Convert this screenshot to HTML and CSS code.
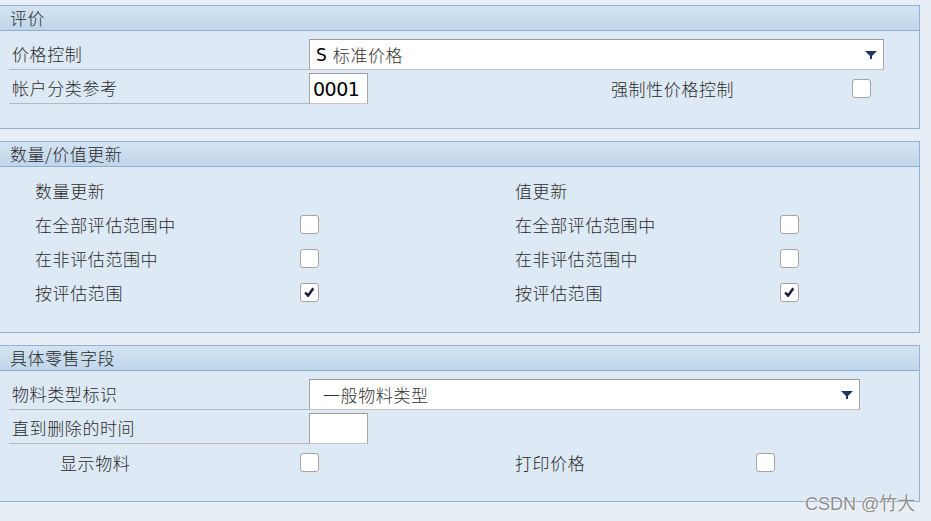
FILE: index.html
```html
<!DOCTYPE html>
<html lang="zh-CN">
<head>
<meta charset="utf-8">
<title>评价</title>
<link rel="stylesheet" href="styles.css">
</head>
<body>
<section class="panel p1">
  <div class="hdr">评价</div>
  <div class="body">
    <div class="row">
      <div class="lbl">价格控制</div>
      <div class="input dd w-dd1"><span class="code">S</span><span class="val">标准价格</span><span class="arrow"></span></div>
    </div>
    <div class="row">
      <div class="lbl">帐户分类参考</div>
      <div class="input small"><span class="code big">0001</span></div>
      <div class="plain l-force">强制性价格控制</div>
      <span class="cb"></span>
    </div>
  </div>
</section>

<section class="panel p2">
  <div class="hdr">数量/价值更新</div>
  <div class="body">
    <div class="qrow">
      <div class="half"><span class="qlbl">数量更新</span></div>
      <div class="half"><span class="qlbl">值更新</span></div>
    </div>
    <div class="qrow">
      <div class="half"><span class="qlbl">在全部评估范围中</span><span class="cb"></span></div>
      <div class="half"><span class="qlbl">在全部评估范围中</span><span class="cb"></span></div>
    </div>
    <div class="qrow">
      <div class="half"><span class="qlbl">在非评估范围中</span><span class="cb"></span></div>
      <div class="half"><span class="qlbl">在非评估范围中</span><span class="cb"></span></div>
    </div>
    <div class="qrow">
      <div class="half"><span class="qlbl">按评估范围</span><span class="cb on"><svg viewBox="0 0 18 18" width="18" height="18"><path d="M4.5 9.5 L7.5 13 L13 5" fill="none" stroke="#1c1c3a" stroke-width="2.6" stroke-linejoin="round"/></svg></span></div>
      <div class="half"><span class="qlbl">按评估范围</span><span class="cb on"><svg viewBox="0 0 18 18" width="18" height="18"><path d="M4.5 9.5 L7.5 13 L13 5" fill="none" stroke="#1c1c3a" stroke-width="2.6" stroke-linejoin="round"/></svg></span></div>
    </div>
  </div>
</section>

<section class="panel p3">
  <div class="hdr">具体零售字段</div>
  <div class="body">
    <div class="row">
      <div class="lbl">物料类型标识</div>
      <div class="input dd w-dd2"><span class="val ind">一般物料类型</span><span class="arrow"></span></div>
    </div>
    <div class="row">
      <div class="lbl">直到删除的时间</div>
      <div class="input small"></div>
    </div>
    <div class="qrow last">
      <div class="half"><span class="qlbl ind2">显示物料</span><span class="cb"></span></div>
      <div class="half"><span class="qlbl short">打印价格</span><span class="cb"></span></div>
    </div>
  </div>
</section>

<div class="wm">CSDN @竹大</div>
</body>
</html>
```

FILE: styles.css
```css
html, body {
  margin: 0;
  padding: 0;
}
body {
  background: #e7eef6;
  width: 931px;
  height: 521px;
  overflow: hidden;
  position: relative;
  padding-top: 5px;
  box-sizing: border-box;
  font-family: "Noto Sans CJK SC", "Noto Sans", sans-serif;
  font-weight: 300;
  color: #2b2b2b;
}
.panel {
  width: 919px;
  border: 1px solid #92b1d3;
  border-left: none;
  background: #dde9f4;
  margin-bottom: 12px;
}
.hdr {
  height: 24px;
  line-height: 24px;
  padding-left: 10px;
  font-size: 17px;
  letter-spacing: 0.5px;
  background: linear-gradient(#d3e3f2, #c0d6eb);
  border-bottom: 1px solid #8eadd0;
  color: #2a2a2a;
}
.p1 .body { padding: 8px 0 24px; }
.p2 .body { padding: 6px 0 23px; }
.p3 .body { padding: 8px 0 23px; }

.row {
  display: flex;
  align-items: center;
  height: 31px;
  margin-bottom: 3px;
}
.row:last-child { margin-bottom: 0; }
.lbl {
  box-sizing: border-box;
  width: 300px;
  flex: none;
  margin-left: 9px;
  height: 31px;
  line-height: 30px;
  padding-left: 3px;
  border-bottom: 1px solid #b4b8bd;
  font-size: 17px;
  letter-spacing: 0.6px;
  align-self: flex-end;
}
.input {
  box-sizing: border-box;
  height: 31px;
  flex: none;
  background: #fff;
  border: 1px solid #a6a6a6;
  border-top-color: #9a9a9a;
  border-bottom-color: #c4c4c4;
  display: flex;
  align-items: center;
  position: relative;
}
.w-dd1 { width: 575px; }
.w-dd2 { width: 551px; }
.small { width: 59px; }
.code {
  font-family: "DejaVu Sans", sans-serif;
  font-weight: 400;
  font-size: 17px;
  color: #000;
  margin-left: 6px;
}
.code.big { font-size: 19px; margin-left: 3px; letter-spacing: -0.5px; }
.val {
  font-size: 17px;
  margin-left: 6px;
  letter-spacing: 0.6px;
  color: #333;
}
.val.ind { margin-left: 13px; }
.arrow {
  position: absolute;
  right: 6px;
  top: 11px;
  width: 0;
  height: 0;
  border-left: 6px solid transparent;
  border-right: 6px solid transparent;
  border-top: 6px solid #1f3462;
}
.arrow::after {
  content: "";
  position: absolute;
  left: -1px;
  top: -1px;
  width: 2px;
  height: 3px;
  background: #1f3462;
}
.plain {
  font-size: 17px;
  letter-spacing: 0.6px;
}
.l-force { margin-left: 243px; width: 241px; flex: none; }
.cb {
  box-sizing: border-box;
  width: 19px;
  height: 19px;
  border: 1px solid #a5a5a5;
  border-radius: 3px;
  background: #fff;
  display: inline-flex;
  align-items: center;
  justify-content: center;
  flex: none;
}
.cb svg { display: block; }

.qrow {
  display: flex;
  height: 34px;
  align-items: center;
}
.qrow.last { height: 31px; margin-top: 3px; }
.half {
  display: flex;
  align-items: center;
  flex: none;
  width: 400px;
}
.half:first-child { margin-left: 35px; width: 480px; }
.qlbl {
  width: 265px;
  flex: none;
  font-size: 17px;
  letter-spacing: 0.6px;
}
.qlbl.ind2 { width: 240px; padding-left: 25px; }
.qlbl.short { width: 241px; }

.wm {
  position: absolute;
  left: 805px;
  top: 489px;
  font-family: "Liberation Sans", "Noto Sans CJK SC", sans-serif;
  font-weight: 400;
  font-size: 18px;
  color: #8e8e8e;
  text-shadow: 0 0 2px #fff, 0 0 1px #fff;
}
```
